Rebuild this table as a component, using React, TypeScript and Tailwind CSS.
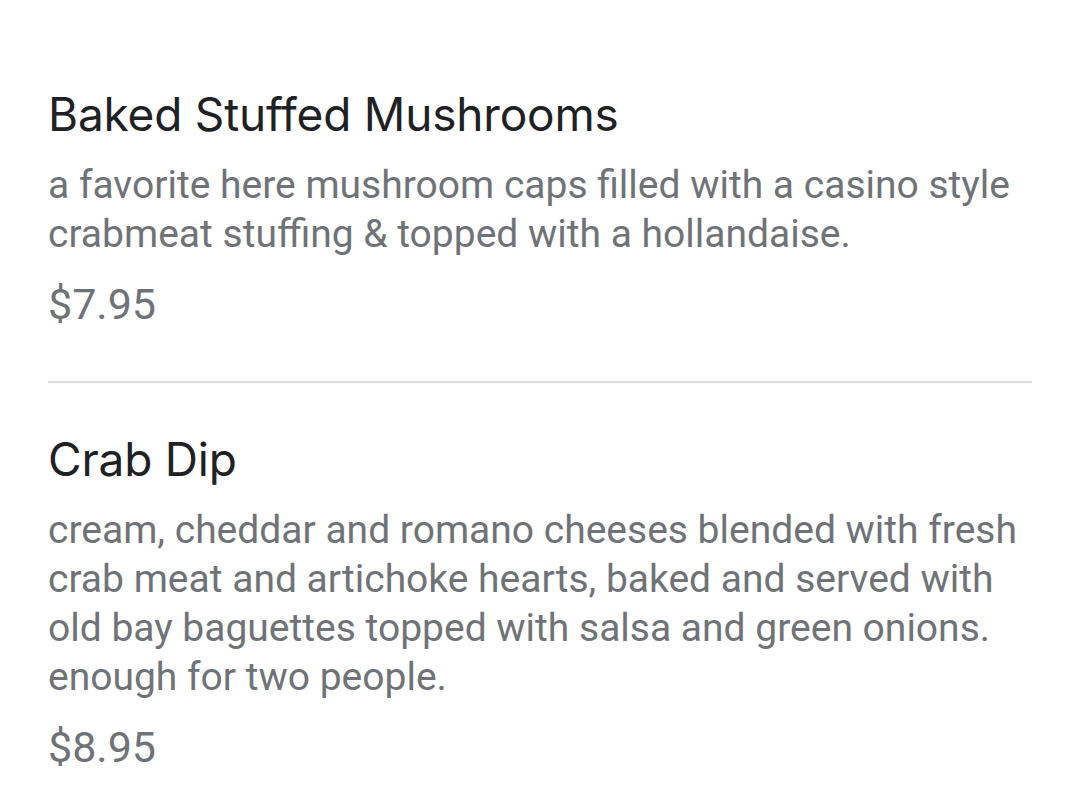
const items = [
  {
    name: 'Baked Stuffed Mushrooms',
    description: 'a favorite here mushroom caps filled with a casino style crabmeat stuffing & topped with a hollandaise.',
    price: '$7.95',
  },
  {
    name: 'Crab Dip',
    description:
      'cream, cheddar and romano cheeses blended with fresh crab meat and artichoke hearts, baked and served with old bay baguettes topped with salsa and green onions. enough for two people.',
    price: '$8.95',
  },
];

export default function App() {
  return (
    <div className="min-h-screen bg-white px-[48px] pt-[86px]">
      {items.map((item, i) => (
        <div key={item.name}>
          {i > 0 && <div className="mt-[51px] mb-[48px] h-[2px] bg-[#dadce0]" />}
          <h3 className="text-[46px] leading-[56px] text-[#202124] font-['Inter',sans-serif] tracking-[-0.2px]">
            {item.name}
          </h3>
          <p className="mt-[19px] text-[39px] leading-[49px] text-[#6f7378] font-['Roboto',sans-serif]">
            {item.description}
          </p>
          <div className="mt-[19px] text-[43px] leading-[52px] text-[#6f7378] font-['Roboto',sans-serif]">
            {item.price}
          </div>
        </div>
      ))}
    </div>
  );
}
